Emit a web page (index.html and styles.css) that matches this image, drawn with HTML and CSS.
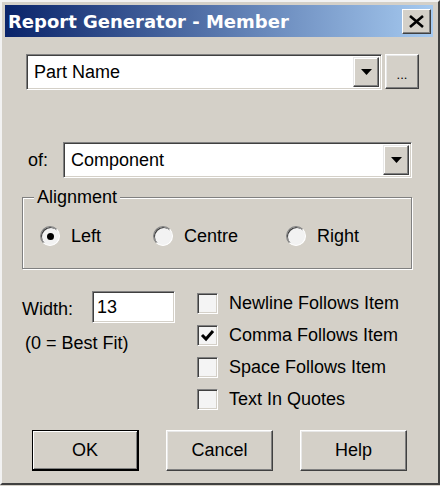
FILE: index.html
```html
<!DOCTYPE html>
<html>
<head>
<meta charset="utf-8">
<link rel="stylesheet" href="styles.css">
</head>
<body>
<div class="window">
  <div class="titlebar">
    <span class="title">Report Generator - Member</span>
    <span class="close">
      <svg width="17" height="13" viewBox="0 0 17 13"><path d="M2 1 L15 12 M15 1 L2 12" stroke="#000" stroke-width="2.6" fill="none"/></svg>
    </span>
  </div>
  <div class="content">
    <div class="row-part">
      <div class="combo combo-part">
        <span class="combo-text">Part Name</span>
        <span class="drop"><svg width="11" height="6" viewBox="0 0 11 6"><polygon points="0,0 11,0 5.5,6" fill="#000"/></svg></span>
      </div>
      <span class="btn btn-dots">...</span>
    </div>
    <div class="row-of">
      <span class="of-label">of:</span>
      <div class="combo combo-comp">
        <span class="combo-text">Component</span>
        <span class="drop"><svg width="11" height="6" viewBox="0 0 11 6"><polygon points="0,0 11,0 5.5,6" fill="#000"/></svg></span>
      </div>
    </div>
    <div class="group">
      <span class="group-title">Alignment</span>
      <div class="radios">
        <span class="radio r-left"><span class="radio-circle checked"></span>Left</span>
        <span class="radio r-centre"><span class="radio-circle"></span>Centre</span>
        <span class="radio r-right"><span class="radio-circle"></span>Right</span>
      </div>
    </div>
    <div class="lower">
      <div class="width-col">
        <div class="width-row">
          <span class="width-label">Width:</span>
          <span class="field width-input">13</span>
        </div>
        <div class="hint">(0 = Best Fit)</div>
      </div>
      <div class="checks">
        <div class="check"><span class="box"></span>Newline Follows Item</div>
        <div class="check"><span class="box"><svg width="15" height="13" viewBox="0 0 15 13"><path d="M2 6 L6 10 L13 2" stroke="#000" stroke-width="3" fill="none"/></svg></span>Comma Follows Item</div>
        <div class="check"><span class="box"></span>Space Follows Item</div>
        <div class="check"><span class="box"></span>Text In Quotes</div>
      </div>
    </div>
    <div class="buttons">
      <span class="btn btn-main default">OK</span>
      <span class="btn btn-main">Cancel</span>
      <span class="btn btn-main">Help</span>
    </div>
  </div>
</div>
</body>
</html>
```

FILE: styles.css
```css
html, body {
  margin: 0;
  padding: 0;
  background: #d4d0c8;
}
body {
  font-family: "Liberation Sans", Arial, sans-serif;
  font-size: 18px;
  color: #000;
}
.window {
  width: 440px;
  height: 485px;
  box-sizing: border-box;
  background: #d4d0c8;
  border: 2px solid;
  border-color: #f2f2f2 #404040 #404040 #f2f2f2;
  padding: 3px 5px 3px 3px;
  display: flex;
  flex-direction: column;
}
.titlebar {
  height: 32px;
  flex: none;
  display: flex;
  align-items: center;
  justify-content: space-between;
  background: linear-gradient(to right, #0a246a, #a6caf0);
}
.title {
  font-family: "DejaVu Sans", sans-serif;
  font-weight: bold;
  font-size: 18px;
  color: #fff;
  padding-left: 3px;
}
.close {
  width: 29px;
  height: 25px;
  box-sizing: border-box;
  margin-right: 2px;
  background: #d4d0c8;
  border: 1px solid;
  border-color: #fff #404040 #404040 #fff;
  box-shadow: inset -1px -1px 0 #808080;
  display: flex;
  align-items: center;
  justify-content: center;
}
.content {
  display: flex;
  flex-direction: column;
  align-items: flex-start;
}
.combo, .field {
  box-sizing: border-box;
  background: #fff;
  border: 1px solid;
  border-color: #808080 #fff #fff #808080;
  box-shadow: inset 1px 1px 0 #404040, inset -1px -1px 0 #d4d0c8;
}
.combo {
  display: flex;
  align-items: stretch;
  height: 36px;
  padding: 2px;
}
.combo-text {
  flex: 1;
  display: flex;
  align-items: center;
  padding-left: 5px;
}
.drop {
  width: 26px;
  box-sizing: border-box;
  background: #d4d0c8;
  border: 1px solid;
  border-color: #e8e8e8 #404040 #404040 #e8e8e8;
  box-shadow: inset -1px -1px 0 #808080, inset 1px 1px 0 #fff;
  display: flex;
  align-items: center;
  justify-content: center;
}
.btn {
  box-sizing: border-box;
  background: #d4d0c8;
  border: 1px solid;
  border-color: #fff #404040 #404040 #fff;
  box-shadow: inset -1px -1px 0 #808080, inset 1px 1px 0 #e8e8e8;
  display: flex;
  align-items: center;
  justify-content: center;
}
.row-part {
  display: flex;
  margin-top: 17px;
  margin-left: 21px;
}
.combo-part {
  width: 356px;
}
.btn-dots {
  width: 34px;
  height: 35px;
  margin-left: 3px;
  font-size: 13px;
  padding-top: 6px;
}
.row-of {
  display: flex;
  align-items: center;
  margin-top: 52px;
  margin-left: 23px;
}
.of-label {
  width: 35px;
}
.combo-comp {
  width: 349px;
}
.group {
  position: relative;
  box-sizing: border-box;
  width: 390px;
  height: 72px;
  margin-top: 19px;
  margin-left: 17px;
  border: 1px solid #808080;
  box-shadow: 1px 1px 0 #fff, inset 1px 1px 0 #fff;
}
.group-title {
  position: absolute;
  top: -11px;
  left: 11px;
  line-height: 20px;
  padding: 0 3px;
  background: #d4d0c8;
}
.radios {
  display: flex;
  padding: 28px 0 0 17px;
}
.radio {
  display: flex;
  align-items: center;
  height: 20px;
}
.r-left { width: 113px; }
.r-centre { width: 133px; }
.radio-circle {
  width: 20px;
  height: 20px;
  box-sizing: border-box;
  border-radius: 50%;
  background: #f2f2f2;
  border: 1px solid;
  border-color: #808080 #fff #fff #808080;
  box-shadow: inset 1px 1px 0 #404040;
  margin-right: 11px;
  display: flex;
  align-items: center;
  justify-content: center;
}
.radio-circle.checked::after {
  content: "";
  width: 7px;
  height: 7px;
  border-radius: 50%;
  background: #000;
}
.lower {
  display: flex;
  margin-top: 18px;
  margin-left: 17px;
}
.width-col {
  width: 175px;
  padding-top: 4px;
}
.width-row {
  display: flex;
  align-items: center;
}
.width-label {
  width: 70px;
  padding-top: 4px;
}
.width-input {
  width: 83px;
  height: 32px;
  display: flex;
  align-items: center;
  padding-left: 4px;
}
.hint {
  margin-top: 10px;
  line-height: 20px;
  padding-left: 3px;
}
.checks {
  display: flex;
  flex-direction: column;
}
.check {
  height: 32px;
  display: flex;
  align-items: center;
}
.box {
  width: 21px;
  height: 21px;
  box-sizing: border-box;
  background: #f4f4f4;
  border: 1px solid;
  border-color: #808080 #fff #fff #808080;
  box-shadow: inset 1px 1px 0 #404040, inset -1px -1px 0 #d4d0c8;
  margin-right: 11px;
  display: flex;
  align-items: center;
  justify-content: center;
}
.buttons {
  display: flex;
  gap: 27px;
  margin-top: 15px;
  margin-left: 27px;
}
.btn-main {
  width: 107px;
  height: 41px;
}
.btn.default {
  border: 1px solid #000;
  border-right-width: 2px;
  border-bottom-width: 2px;
  box-shadow: inset 1px 1px 0 #fff, inset -1px -1px 0 #808080;
}
```
